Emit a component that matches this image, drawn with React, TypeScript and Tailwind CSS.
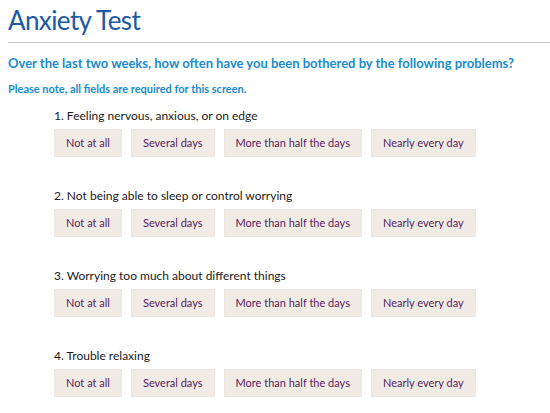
const options = ["Not at all", "Several days", "More than half the days", "Nearly every day"];

const questions = [
  "1. Feeling nervous, anxious, or on edge",
  "2. Not being able to sleep or control worrying",
  "3. Worrying too much about different things",
  "4. Trouble relaxing",
];

function Question({ label }: { label: string }) {
  return (
    <div className="pl-[54px]">
      <p className="text-[12px] leading-[16px] text-[#1a1a1a]">{label}</p>
      <div className="mt-[5px] flex gap-[9px]">
        {options.map((o) => (
          <button
            key={o}
            className="h-[28px] border border-[#ece7e1] bg-[#f0ebe5] px-[11px] text-[11px] text-[#5a1d5c]"
          >
            {o}
          </button>
        ))}
      </div>
    </div>
  );
}

export default function App() {
  return (
    <div className="h-[413px] w-[550px] overflow-hidden bg-white pl-[8px] font-['Lato','Open_Sans',sans-serif]">
      <h1 className="pt-[4px] text-[26px] leading-[33px] font-normal tracking-[-0.6px] text-[#1c5aa3]">
        Anxiety Test
      </h1>
      <div className="mt-[5px] h-px bg-[#c4c4c4]" />
      <p className="mt-[12px] text-[13px] leading-[16px] font-bold text-[#1a8ccd]">
        Over the last two weeks, how often have you been bothered by the following problems?
      </p>
      <p className="mt-[11px] text-[11px] leading-[14px] font-bold text-[#1a8ccd]">
        Please note, all fields are required for this screen.
      </p>
      <div className="mt-[12px] flex flex-col gap-[31px] -ml-[8px]">
        {questions.map((q) => (
          <Question key={q} label={q} />
        ))}
      </div>
    </div>
  );
}
